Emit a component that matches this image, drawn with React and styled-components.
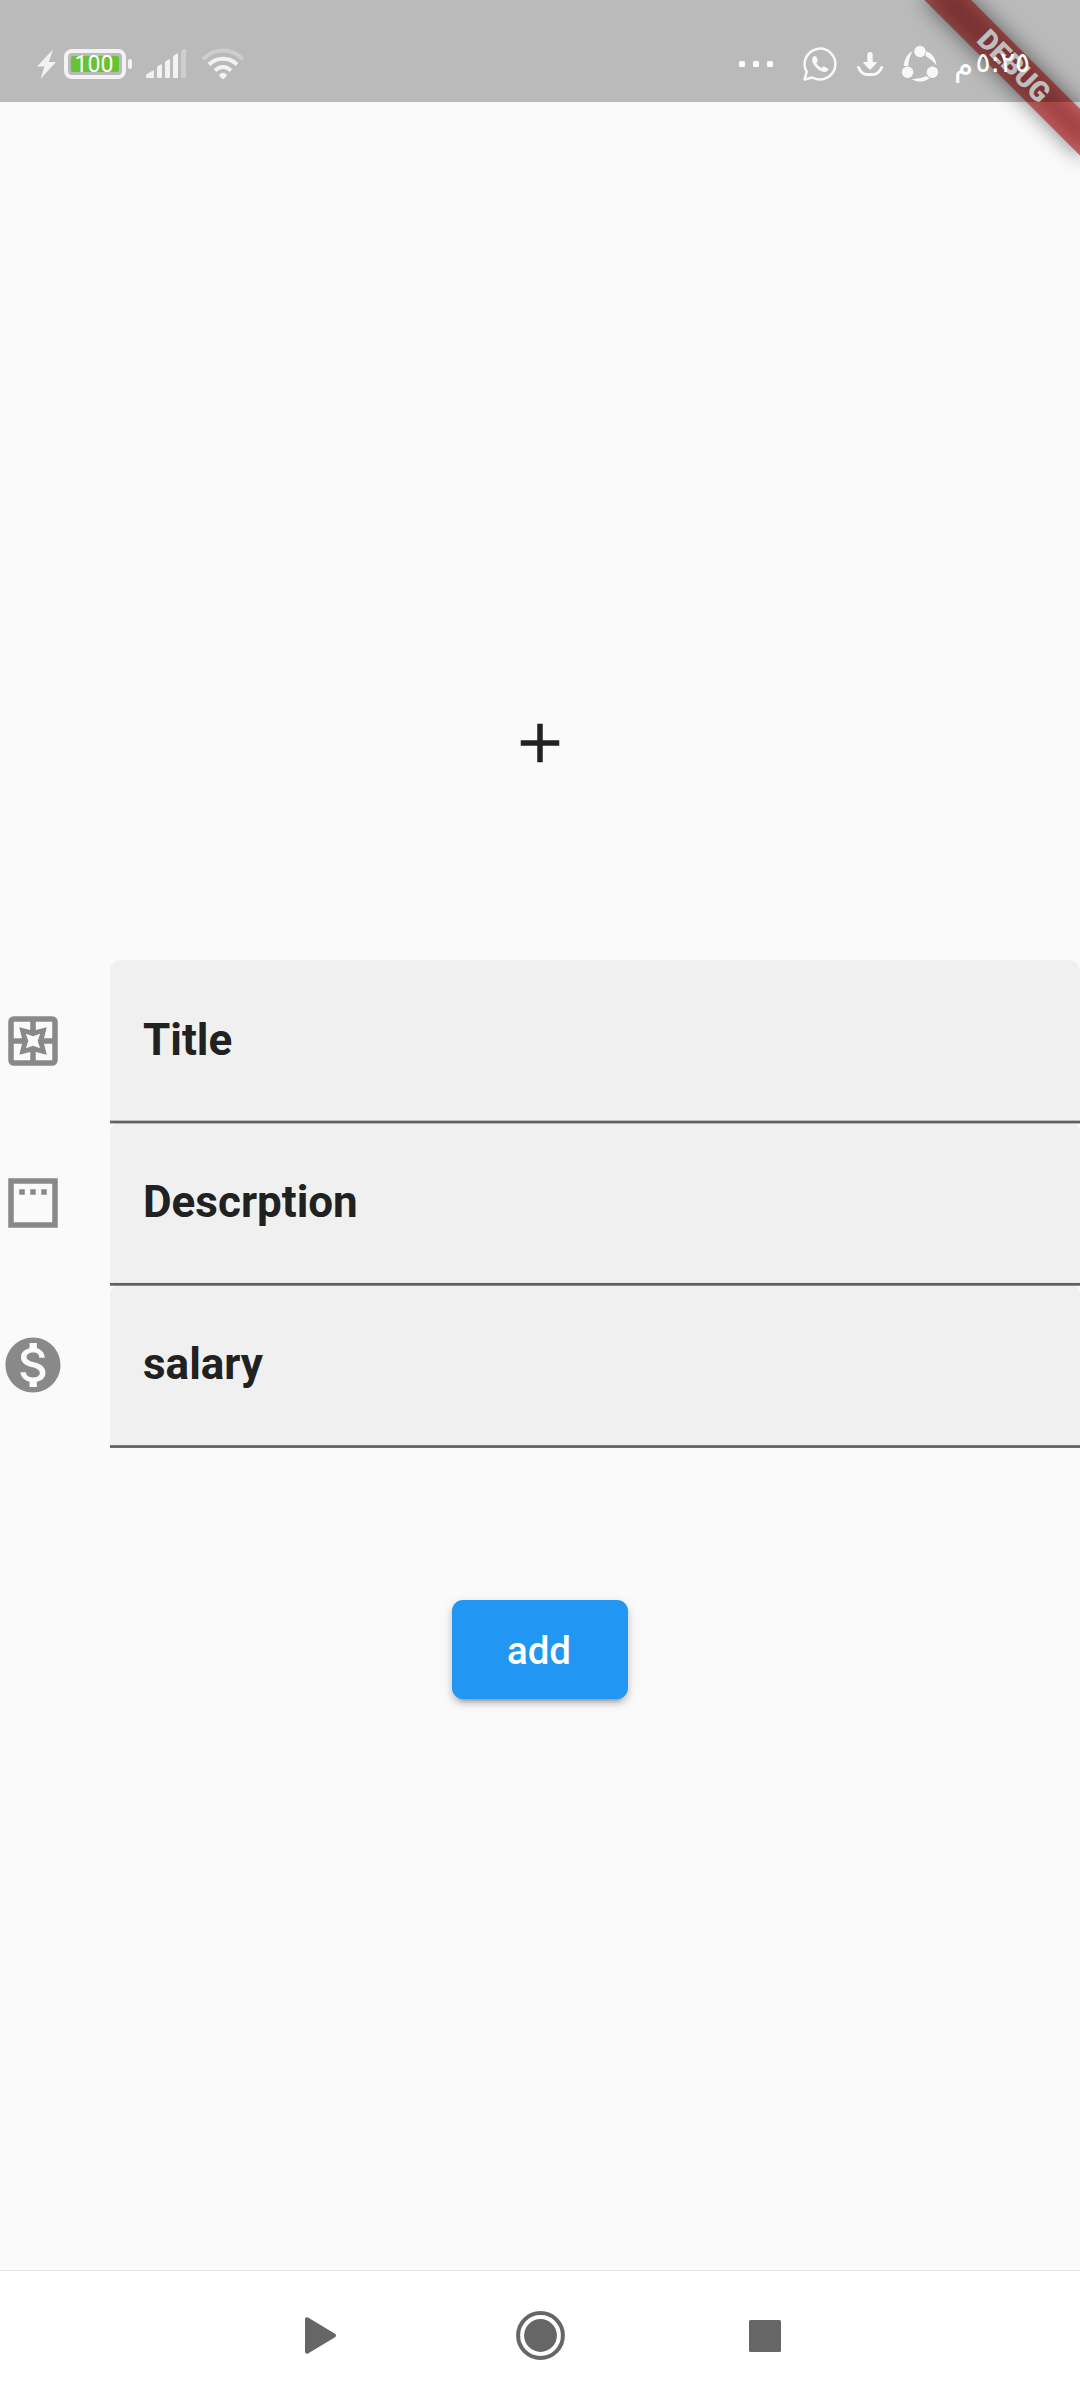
import React from "react";
import styled, { createGlobalStyle } from "styled-components";
import { MdAdd, MdMonetizationOn } from "react-icons/md";

const GlobalStyle = createGlobalStyle`
  *, *::before, *::after { box-sizing: border-box; }
  body { margin: 0; background: #fafafa; }
`;

const Screen = styled.div`
  position: relative;
  display: flex;
  flex-direction: column;
  width: 1080px;
  height: 2400px;
  overflow: hidden;
  background: #fafafa;
  color: #212121;
  font-family: Roboto, "Noto Sans", sans-serif;
`;

const StatusBar = styled.header`
  position: relative;
  z-index: 2;
  display: flex;
  justify-content: space-between;
  height: 102px;
  padding: 46px 50px 0 37px;
  background: rgba(0, 0, 0, 0.255);
`;

const StatusGroup = styled.div`
  display: flex;
  align-items: center;
  height: 36px;
`;

const Glyph = styled.svg`
  display: block;
  flex: none;
  overflow: visible;
  margin-left: ${(p) => p.$gap || 0}px;
`;

const Battery = styled.div`
  display: flex;
  width: 62px;
  height: 30px;
  margin-left: 8px;
  padding: 3px;
  border: 4px solid #f2f2f2;
  border-radius: 8px;
`;

const BatteryLevel = styled.div`
  display: flex;
  flex: 1;
  align-items: center;
  justify-content: center;
  padding: 2px 2px 0 0;
  border-radius: 2px;
  background: #67c235;
  color: #fff;
  font-size: 23px;
  line-height: 16px;
`;

const BatteryTip = styled.div`
  width: 4px;
  height: 10px;
  margin-left: 2px;
  border-radius: 2px;
  background: #f2f2f2;
`;

const Clock = styled.div`
  display: flex;
  direction: rtl;
  align-items: center;
  justify-content: space-between;
  width: 76px;
  margin-left: 16px;
  padding-bottom: 2px;
  color: #fff;
  font-family: "DejaVu Sans", sans-serif;
  font-size: 28px;
  line-height: 34px;
`;

const ClockPeriod = styled.span`
  padding-top: 4px;
  font-size: 31px;
`;

const DebugCorner = styled.div`
  position: absolute;
  z-index: 1;
  top: 0;
  left: 1080px;
  width: 0;
  height: 0;
  transform: rotate(45deg);
`;

const Ribbon = styled.div`
  position: absolute;
  top: 77px;
  left: -110px;
  width: 220px;
  height: 33px;
`;

const RibbonShadow = styled(Ribbon)`
  background: rgba(0, 0, 0, 0.5);
  filter: blur(10.9px);
`;

const RibbonLabel = styled(Ribbon)`
  display: flex;
  align-items: center;
  justify-content: center;
  background: rgba(183, 28, 28, 0.627);
  color: #fff;
  font-size: 28px;
  font-weight: 900;
  line-height: 33px;
`;

const Content = styled.main`
  display: flex;
  flex: 1;
  flex-direction: column;
  align-items: center;
  padding-top: 608px;
`;

const Form = styled.form`
  display: flex;
  flex-direction: column;
  width: 100%;
  margin: 184px 0 154.4px;
`;

const FieldRow = styled.label`
  display: flex;
  align-items: center;
  height: 162px;
  color: #898989;
`;

const FieldBox = styled.div`
  position: relative;
  display: flex;
  flex: 1;
  align-items: center;
  height: 100%;
  margin-left: 44px;
  padding-left: 33px;
  border-radius: 11px 11px 0 0;
  background: #f0f0f0;
  color: #212121;
  font-size: 44px;
  font-weight: 700;
  line-height: 52px;
`;

const FieldText = styled.span`
  margin-top: -3px;
`;

const Underline = styled.div`
  position: absolute;
  z-index: 1;
  left: 0;
  right: 0;
  bottom: -2px;
  height: 4px;
  background: linear-gradient(
    ${(p) => p.$tones[0]} 1px,
    ${(p) => p.$tones[1]} 1px 2px,
    ${(p) => p.$tones[2]} 2px 3px,
    ${(p) => p.$tones[3]} 3px
  );
`;

const AddButton = styled.button`
  display: flex;
  align-items: center;
  justify-content: center;
  width: 176px;
  height: 99px;
  padding: 2px 2px 0 0;
  border: 0;
  border-radius: 11px;
  background: #2196f3;
  box-shadow: 0 8px 3px -6px rgba(0, 0, 0, 0.2),
    0 5px 6px 0 rgba(0, 0, 0, 0.14), 0 3px 12px 0 rgba(0, 0, 0, 0.12);
  color: #fff;
  font-family: Roboto, sans-serif;
  font-size: 38.5px;
  font-weight: 500;
`;

const NavBar = styled.nav`
  display: flex;
  align-items: center;
  height: 130px;
  padding-left: 305px;
  border-top: 1px solid #e4e4e4;
  background: #fff;
`;

const PagesIcon = () => (
  <svg width="66" height="66" viewBox="0 0 24 24" fill="currentColor">
    <path
      fillRule="evenodd"
      d="M5 3h14a2 2 0 0 1 2 2v14a2 2 0 0 1-2 2H5a2 2 0 0 1-2-2V5a2 2 0 0 1 2-2zM5 5v6h3L7 7l4 1V5zM13 5v3l4-1-1 4h3V5zM5 13v6h6v-3l-4 1 1-4zM16 13l1 4-4-1v3h6v-6zM9.400 9.400l2.600.9 2.600-.9-.9 2.600.9 2.600-2.600-.9-2.600.9.9-2.600z"
    />
  </svg>
);

const PanelIcon = () => (
  <svg width="66" height="66" viewBox="0 0 24 24" fill="currentColor">
    <path
      fillRule="evenodd"
      d="M3 3h18v18H3zM5 5v14h14V5zM7 7h2v2H7zM11 7h2v2h-2zM15 7h2v2h-2z"
    />
  </svg>
);

const fields = [
  {
    label: "Title",
    icon: <PagesIcon />,
    tones: ["#bdbdbd", "#626262", "#626262", "#b8b8b8"],
  },
  {
    label: "Descrption",
    icon: <PanelIcon />,
    tones: ["#e6e6e6", "#606060", "#606060", "#8c8c8c"],
  },
  {
    label: "salary",
    icon: <MdMonetizationOn size={66} />,
    tones: ["#f0f0f0", "#7c7c7c", "#5f5f5f", "#707070"],
  },
];

export default function App() {
  return (
    <>
      <GlobalStyle />
      <Screen>
        <StatusBar>
          <StatusGroup>
            <Glyph width="19" height="30" viewBox="37 49 19 30" fill="#f2f2f2">
              <path d="M53 49.500 37 66.500h7.500L40.500 79 56 62h-7.300z" />
            </Glyph>
            <Battery>
              <BatteryLevel>100</BatteryLevel>
            </Battery>
            <BatteryTip />
            <Glyph $gap={14} width="40" height="30" viewBox="146 49 40 30" fill="#f2f2f2">
              <path d="M146 75.500q0-1 1-1.500l5.500-3.300q1.500-.7 1.500.8V78h-7q-1 0-1-1z" />
              <path d="M157 67.500q0-1 1-1.500l3-1.700q1-.5 1 .7v12q0 1-1 1h-3q-1 0-1-1z" />
              <path d="M165 62.500q0-1 1-1.500l3-1.700q1-.5 1 .7v17q0 1-1 1h-3q-1 0-1-1z" />
              <path d="M173 57q0-1 1-1.500l3-2q1-.5 1 .7V77q0 1-1 1h-3q-1 0-1-1z" />
              <path fill="#cecece" d="M181 51.500q0-1 1-1.500l3-1.200q1-.3 1 .7V77q0 1-1 1h-3q-1 0-1-1z" />
            </Glyph>
            <Glyph $gap={15} width="44" height="32" viewBox="201 49 44 32" fill="none" stroke="#f2f2f2" strokeWidth="4">
              <path stroke="#cecece" d="M203 60.500Q211.500 51.500 223 51.500T243 60.500" />
              <path d="M209 65.500Q215 59.700 223 59.700T237 65.500" />
              <path d="M215 71.700Q218.500 68 223 68T231 71.700" />
              <path fill="#f2f2f2" stroke="none" d="M219.300 75.500Q223 72 226.700 75.500 227.500 76.500 226 77.700L224 79.800Q223 80.500 222 79.800L220 77.700Q218.500 76.500 219.300 75.500Z" />
            </Glyph>
          </StatusGroup>
          <StatusGroup>
            <Glyph width="34" height="6" viewBox="739 61 34 6" fill="#fff">
              <rect x="739" y="61" width="6" height="6" rx="1.500" />
              <rect x="753" y="61" width="6" height="6" rx="1.500" />
              <rect x="767" y="61" width="6" height="6" rx="1.500" />
            </Glyph>
            <Glyph $gap={30} width="34" height="36" viewBox="803 46 34 36" fill="#f8f8f8">
              <path
                fill="none"
                stroke="#f8f8f8"
                strokeWidth="2.500"
                strokeLinejoin="round"
                d="M806.700 71.800A15.400 15.400 0 1 1 812.500 77.500L804.500 79.500Z"
              />
              <path d="M812.200 59.800C812.200 57.300 813.500 56 815 56C815.900 56 816.300 56.600 816.700 57.500L817.700 60.200C818 61.300 817 62 816.300 63C817.600 65.300 819.300 67 821.600 68C822.700 67 823.200 66.200 824.200 66.600L827.400 68.300C828.700 69 828.300 70.300 827.400 71.100C825.500 72.600 822.700 72.200 819.400 70.200C815.600 67.900 812.200 63.600 812.200 59.800Z" />
            </Glyph>
            <Glyph $gap={19} width="28" height="36" viewBox="856 46 28 36" fill="#f8f8f8">
              <path d="M867.300 54.500Q867.300 52 870 52T872.700 54.500V62H876Q877.500 62 876.500 63.200L871 69Q870 70 869 69L863.500 63.200Q862.500 62 864 62H867.300Z" />
              <path fill="none" stroke="#f8f8f8" strokeWidth="3" strokeLinecap="round" d="M858.500 67.500Q861.500 74.500 867 74.500H873Q878.500 74.500 881.700 67.500" />
            </Glyph>
            <Glyph $gap={18} width="36" height="36" viewBox="902 46 36 36" fill="#f8f8f8">
              <circle cx="920" cy="51.500" r="5.700" />
              <circle cx="907.600" cy="72.200" r="5.700" />
              <circle cx="932.400" cy="72.200" r="5.700" />
              <path d="M903.700 66Q904.500 55.500 912.700 51Q908.500 58 908.200 66Z" />
              <path d="M926.500 51.200Q935.500 55 936.500 65.500Q932.500 60 925.500 56Z" />
              <path d="M911.500 79Q919.500 79.500 926.500 76L929.500 78.500Q920.500 84.500 911.500 79Z" />
            </Glyph>
            <Clock>
              <span>٥:٢٥</span>
              <ClockPeriod>م</ClockPeriod>
            </Clock>
          </StatusGroup>
        </StatusBar>

        <DebugCorner>
          <RibbonShadow />
          <RibbonLabel>DEBUG</RibbonLabel>
        </DebugCorner>

        <Content>
          <MdAdd size={66} />
          <Form>
            {fields.map((field) => (
              <FieldRow key={field.label}>
                {field.icon}
                <FieldBox>
                  <FieldText>{field.label}</FieldText>
                  <Underline $tones={field.tones} />
                </FieldBox>
              </FieldRow>
            ))}
          </Form>
          <AddButton>add</AddButton>
        </Content>

        <NavBar>
          <Glyph width="31" height="37" viewBox="0 0 31 37" fill="#666">
            <path stroke="#666" strokeWidth="4" strokeLinejoin="round" d="M2 2.300v32.400L29 18.500z" />
          </Glyph>
          <Glyph $gap={180} width="49" height="49" viewBox="0 0 49 49" fill="#666">
            <circle cx="24.500" cy="24.500" r="22.400" fill="none" stroke="#666" strokeWidth="4" />
            <circle cx="24.500" cy="24.500" r="16.400" />
          </Glyph>
          <Glyph $gap={184} width="32" height="32" viewBox="0 0 32 32" fill="#666">
            <rect width="32" height="32" rx="1.500" />
          </Glyph>
        </NavBar>
      </Screen>
    </>
  );
}
